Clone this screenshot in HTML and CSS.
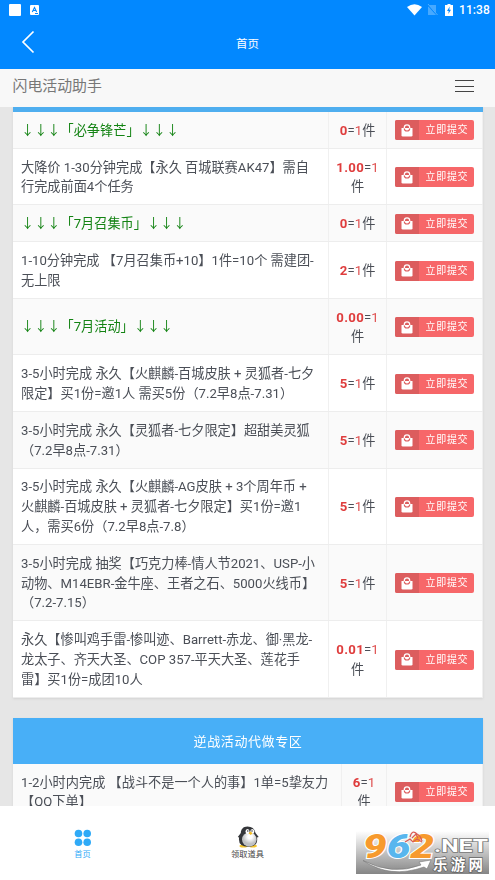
FILE: index.html
```html
<!DOCTYPE html>
<html lang="zh-CN">
<head>
<meta charset="utf-8">
<title>首页</title>
<link rel="stylesheet" href="styles.css">
</head>
<body>
<svg width="0" height="0" class="defs">
  <symbol id="bag" viewBox="0 0 12 13"><path d="M.5 4h11v7.2q0 1.3-1.3 1.3H1.8Q.5 12.500.5 11.200z" fill="#fff"/><path d="M3.300 5V3.500a2.700 2.700 0 0 1 5.400 0V5" fill="none" stroke="#fff" stroke-width="1.300"/><path d="M3.300 4.500a2.700 2.500 0 0 0 5.400 0" fill="none" stroke="#dc5d5e" stroke-width="1.200"/></symbol>
</svg>
<header class="top">
  <div class="status">
    <span class="square"></span>
    <svg class="letter" width="9" height="10" viewBox="0 0 9 10"><rect width="9" height="10" rx="1" fill="#fff"/><path d="M2.300 7 4.500 2.500 6.700 7M3 5.500h3M5 8.500h3" fill="none" stroke="#0288ff" stroke-width="1.100"/></svg>
    <svg class="wifi" width="15" height="12" viewBox="0 0 15 12"><path d="M0 3Q7.500-2.500 15 3L7.500 11.500z" fill="#fff"/></svg>
    <svg class="sim" width="11" height="12" viewBox="0 0 11 12"><path d="M3 1h6v10H1V3z" fill="#47a9ff"/><path d="M0 0l10.500 11.500" stroke="#0288ff" stroke-width="1.500"/><path d="M1 0l9.500 11" stroke="#65b8ff" stroke-width=".8"/></svg>
    <svg class="battery" width="8" height="12" viewBox="0 0 8 12"><path d="M2.500 0h3v1H8v11H0V1h2.500z" fill="#fff"/><path d="M4.700 2.500 2 7h1.700L3.300 10 6 5.700H4.300z" fill="#0288ff"/></svg>
    <span class="clock">11:38</span>
  </div>
  <div class="titlebar">
    <svg class="back" width="14" height="24" viewBox="0 0 14 24"><path d="M12.500 1.500 2 12l10.500 10.500" fill="none" stroke="#fff" stroke-width="1.700"/></svg>
    <span class="title">首页</span>
  </div>
</header>
<nav class="sitebar">
  <span>闪电活动助手</span>
  <i class="menu"></i>
</nav>
<main class="content">
  <section class="table">
    <div class="strip"></div>
    <div class="row one alt"><div class="name green"><span>↓↓↓「必争锋芒」↓↓↓</span></div><div class="price"><span><b>0</b>=<em>1</em>件</span></div><div class="act"><a class="btn"><i><svg><use href="#bag"/></svg></i><span>立即提交</span></a></div></div>
    <div class="row two"><div class="name"><span>大降价 1-30分钟完成【永久 百城联赛AK47】需自</span><span>行完成前面4个任务</span></div><div class="price"><span><b>1.00</b>=<em>1</em></span><span>件</span></div><div class="act"><a class="btn"><i><svg><use href="#bag"/></svg></i><span>立即提交</span></a></div></div>
    <div class="row one alt"><div class="name green"><span>↓↓↓「7月召集币」↓↓↓</span></div><div class="price"><span><b>0</b>=<em>1</em>件</span></div><div class="act"><a class="btn"><i><svg><use href="#bag"/></svg></i><span>立即提交</span></a></div></div>
    <div class="row two"><div class="name"><span>1-10分钟完成 【7月召集币+10】1件=10个 需建团-</span><span>无上限</span></div><div class="price"><span><b>2</b>=<em>1</em>件</span></div><div class="act"><a class="btn"><i><svg><use href="#bag"/></svg></i><span>立即提交</span></a></div></div>
    <div class="row two alt"><div class="name green"><span>↓↓↓「7月活动」↓↓↓</span></div><div class="price"><span><b>0.00</b>=<em>1</em></span><span>件</span></div><div class="act"><a class="btn"><i><svg><use href="#bag"/></svg></i><span>立即提交</span></a></div></div>
    <div class="row two"><div class="name"><span>3-5小时完成 永久【火麒麟-百城皮肤 + 灵狐者-七夕</span><span>限定】买1份=邀1人 需买5份（7.2早8点-7.31）</span></div><div class="price"><span><b>5</b>=<em>1</em>件</span></div><div class="act"><a class="btn"><i><svg><use href="#bag"/></svg></i><span>立即提交</span></a></div></div>
    <div class="row two alt"><div class="name"><span>3-5小时完成 永久【灵狐者-七夕限定】超甜美灵狐</span><span>（7.2早8点-7.31）</span></div><div class="price"><span><b>5</b>=<em>1</em>件</span></div><div class="act"><a class="btn"><i><svg><use href="#bag"/></svg></i><span>立即提交</span></a></div></div>
    <div class="row three"><div class="name"><span>3-5小时完成 永久【火麒麟-AG皮肤 + 3个周年币 +</span><span>火麒麟-百城皮肤 + 灵狐者-七夕限定】买1份=邀1</span><span>人，需买6份（7.2早8点-7.8）</span></div><div class="price"><span><b>5</b>=<em>1</em>件</span></div><div class="act"><a class="btn"><i><svg><use href="#bag"/></svg></i><span>立即提交</span></a></div></div>
    <div class="row three alt"><div class="name"><span>3-5小时完成 抽奖【巧克力棒-情人节2021、USP-小</span><span>动物、M14EBR-金牛座、王者之石、5000火线币】</span><span>（7.2-7.15）</span></div><div class="price"><span><b>5</b>=<em>1</em>件</span></div><div class="act"><a class="btn"><i><svg><use href="#bag"/></svg></i><span>立即提交</span></a></div></div>
    <div class="row three"><div class="name"><span>永久【惨叫鸡手雷-惨叫迹、Barrett-赤龙、御·黑龙-</span><span>龙太子、齐天大圣、COP 357-平天大圣、莲花手</span><span>雷】买1份=成团10人</span></div><div class="price"><span><b>0.01</b>=<em>1</em></span><span>件</span></div><div class="act"><a class="btn"><i><svg><use href="#bag"/></svg></i><span>立即提交</span></a></div></div>
  </section>
  <section class="table second">
    <h2>逆战活动代做专区</h2>
    <div class="row two alt"><div class="name"><span>1-2小时内完成 【战斗不是一个人的事】1单=5挚友力</span><span>【QQ下单】</span></div><div class="price"><span><b>6</b>=<em>1</em></span><span>件</span></div><div class="act"><a class="btn"><i><svg><use href="#bag"/></svg></i><span>立即提交</span></a></div></div>
  </section>
</main>
<footer class="tabs">
  <div class="tab active">
    <svg width="18" height="18" viewBox="0 0 18 18" fill="#2faaf7"><circle cx="4.500" cy="4.500" r="3.800"/><circle cx="13.200" cy="4.500" r="3.800"/><circle cx="4.500" cy="13.200" r="3.800"/><circle cx="13.200" cy="13.200" r="3.800"/></svg>
    <span>首页</span>
  </div>
  <div class="tab">
    <svg class="penguin" width="22" height="22" viewBox="0 0 22 22">
      <defs><radialGradient id="belly" cx=".55" cy=".3"><stop offset=".3" stop-color="#fff"/><stop offset="1" stop-color="#bfc1c3"/></radialGradient></defs>
      <ellipse cx="6.500" cy="20" rx="4" ry="1.500" fill="#f5c52d"/><ellipse cx="16" cy="20" rx="4" ry="1.500" fill="#f5c52d"/>
      <path d="M10.500 .6C6 .6 4 3.500 3.800 7L.8 11l1.300.5Q.8 20.500 11.300 20.800 21.500 20.500 20 11.500l1.700-.5-3.200-4Q17 .6 10.500 .6z" fill="#34363a"/>
      <ellipse cx="12.300" cy="13.500" rx="7.300" ry="7" fill="url(#belly)"/><ellipse cx="10.500" cy="5.500" rx="2" ry="2.500" fill="#fff"/><ellipse cx="15.300" cy="5.500" rx="2" ry="2.500" fill="#fff"/>
      <circle cx="10.800" cy="5" r=".7" fill="#222"/><circle cx="15" cy="5" r=".7" fill="#222"/><path d="M11.500 7.200 13.500 5.500l2.200 1.700-2 1.800z" fill="#f5be24"/>
    </svg>
    <span>领取道具</span>
  </div>
  <div class="tab"></div>
  <div class="watermark">
    <svg width="133" height="43" viewBox="0 0 133 43">
      <text x="7" y="27" textLength="71" lengthAdjust="spacingAndGlyphs" class="num"><tspan fill="#f79a2d">9</tspan><tspan fill="#58b6ee">6</tspan><tspan fill="#f79a2d">2</tspan></text>
      <path d="M54 6q2-8 7-3 4 2 5 7M56 7l4-4 2 4M49 11l5-3 3 3 4-3 5 3" fill="none" stroke="#d95c55" stroke-width="1.200"/>
      <path d="M7 29.500Q36 45 65 34l-2-3 12-2-4 9-3-2Q34 48 7 29.500z" fill="#fff" stroke="#777" stroke-width=".6"/>
      <text x="78" y="21" textLength="54" lengthAdjust="spacingAndGlyphs" class="net">.NET</text>
      <text x="77" y="38.500" textLength="50" lengthAdjust="spacing" class="site">乐游网</text>
    </svg>
  </div>
</footer>
</body>
</html>
```

FILE: styles.css
```css
* { box-sizing: border-box; }
body {
  margin: 0;
  width: 495px;
  height: 880px;
  overflow: hidden;
  display: flex;
  flex-direction: column;
  background: #fff;
  font-family: Roboto, "Noto Sans CJK SC", sans-serif;
  color: #4b4f57;
}
.defs { position: absolute; }
.top { height: 69px; flex: none; background: #0288ff; color: #fff; }
.status { height: 20px; display: flex; align-items: center; padding: 0 6px 0 9px; }
.square { width: 12px; height: 12px; background: #fff; border-radius: 1px; }
.letter { margin-left: 9px; }
.wifi { margin-left: auto; }
.sim { margin-left: 5px; }
.battery { margin-left: 7px; }
.clock { margin-left: 6px; font-size: 12px; font-weight: 500; letter-spacing: .1px; width: 30px; white-space: nowrap; }
.titlebar { height: 49px; display: grid; grid-template-columns: 40px 1fr 40px; padding-top: 10px; align-items: start; }
.back { margin-left: 21px; }
.title { text-align: center; font-size: 11.500px; line-height: 28px; }
.sitebar {
  height: 38px;
  flex: none;
  background: #f8f8f8;
  display: flex;
  justify-content: space-between;
  align-items: center;
  padding: 0 21px 4px 12.500px;
  font-size: 14.900px;
  color: #777;
}
.sitebar span { margin-top: -3px; }
.menu { width: 19px; height: 12px; border-top: 1px solid #444; border-bottom: 1px solid #444; display: flex; align-items: center; }
.menu::before { content: ""; height: 1px; width: 19px; background: #444; }
.content { height: 699px; flex: none; overflow: hidden; background: #e6e6e6; padding: 0 12px 0 13px; will-change: transform; }
.table { box-shadow: 0 1px 2px #d4d4d4; }
.strip { height: 5px; background: #4faeef; }
.row { display: grid; grid-template-columns: 316px 58px 96px; background: #fff; border-bottom: 1px solid #ededed; font-size: 13.180px; line-height: 19.700px; }
.row.alt { background: #fafafa; }
.one { height: 36.800px; }
.two { height: 56.620px; }
.three { height: 76.400px; }
.name, .price { display: flex; flex-direction: column; justify-content: center; white-space: nowrap; border-right: 1px solid #f0f0f0; padding-top: 1.400px; }
.name { padding-left: 8px; }
.price { align-items: center; }
.green { color: #138313; }
.price b { color: #df3d3d; font-weight: 700; letter-spacing: .3px; }
.price em { color: #df5050; font-style: normal; }
.act { display: flex; align-items: center; padding: 1.200px 0 0 8px; border-right: 1px solid #f0f0f0; }
.btn { display: flex; width: 79px; height: 20px; border-radius: 2px; overflow: hidden; background: #f76769; color: #fff; font-size: 10px; letter-spacing: .7px; line-height: 19px; }
.btn i { width: 24px; background: #dc5d5e; display: flex; align-items: center; justify-content: center; }
.btn svg { width: 12px; height: 13px; }
.btn span { padding-left: 6.500px; white-space: nowrap; }
.second { margin-top: 20px; }
.second h2 { margin: 0; height: 46px; background: #48aff7; color: #fff; font-size: 13px; font-weight: 400; letter-spacing: .6px; line-height: 47px; text-align: center; }
.second .row { grid-template-columns: 329px 45px 96px; }
.tabs { flex: 1; position: relative; display: grid; grid-template-columns: repeat(3, 1fr); background: #fff; }
.tab { display: flex; flex-direction: column; align-items: center; padding-top: 23px; font-size: 8.200px; line-height: 12px; color: #444; }
.tab span { margin-top: 1px; }
.tab .penguin { margin-top: -3px; }
.tab .penguin + span { margin-top: 0; }
.active { color: #2faaf7; }
.watermark { position: absolute; left: 356px; top: 25px; width: 133px; height: 43px; background: linear-gradient(#fff 0%, #d5d5d5 35%, #858585 100%); }
.watermark svg { display: block; overflow: visible; }
.num { font: italic 900 34px Roboto, sans-serif; stroke: #fff; stroke-width: 2px; paint-order: stroke; }
.net { font: 700 18px Roboto, sans-serif; fill: #fff; stroke: #777; stroke-width: 1.500px; paint-order: stroke; }
.site { font: 700 14.500px "Noto Sans CJK SC", sans-serif; fill: #fff; stroke: #666; stroke-width: 1.500px; paint-order: stroke; }
```
